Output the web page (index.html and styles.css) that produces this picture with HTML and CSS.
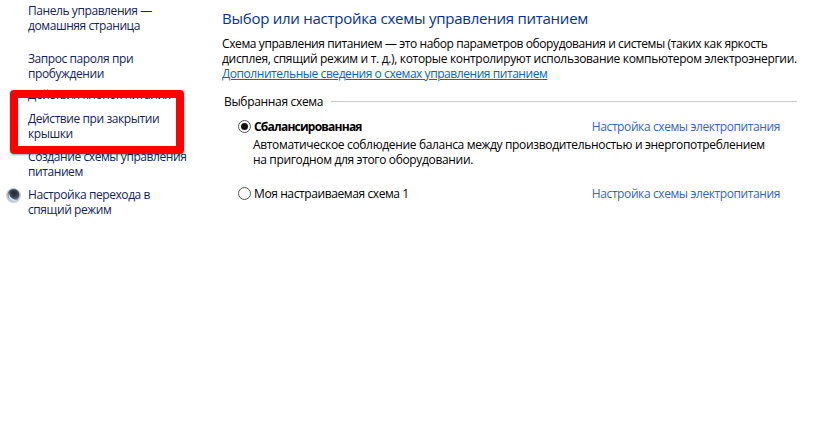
FILE: index.html
```html
<!DOCTYPE html>
<html lang="ru">
<head>
<meta charset="utf-8">
<title>Электропитание</title>
<link rel="stylesheet" href="styles.css">
</head>
<body>
<div class="page">
  <nav class="side">
    <a class="side-link first">Панель управления —<br>домашняя страница</a>
    <a class="side-link before-hidden">Запрос пароля при<br>пробуждении</a>
    <a class="side-link single">Действия кнопок питания</a>
    <a class="side-link">Действие при закрытии<br>крышки</a>
    <a class="side-link">Создание схемы управления<br>питанием</a>
    <a class="side-link has-icon">
      <svg class="moon" width="17" height="17" viewBox="0 0 17 17"><defs><radialGradient id="g" cx="0.55" cy="0.35" r="0.7"><stop offset="0" stop-color="#1c2430"/><stop offset="0.6" stop-color="#46505e"/><stop offset="1" stop-color="#a9c4ea"/></radialGradient></defs><circle cx="8.5" cy="8.500" r="7.500" fill="#c9ccd2"/><circle cx="8.500" cy="8" r="6" fill="url(#g)"/><path d="M4 5c0 4.500 3 7.500 8 8-2 1.300-5 1.300-6.700-.5S3 8 4 5z" fill="#d6e5fb"/></svg>
      Настройка перехода в<br>спящий режим</a>
    <div class="mark"></div>
  </nav>
  <main class="main">
    <h1 class="title">Выбор или настройка схемы управления питанием</h1>
    <p class="intro"><span class="tight">Схема управления питанием — это набор параметров оборудования и системы (таких как яркость</span><br>дисплея, спящий режим и т. д.), которые контролируют использование компьютером электроэнергии.<br><a class="more">Дополнительные сведения о схемах управления питанием</a></p>
    <div class="group-head"><span>Выбранная схема</span><i class="rule"></i></div>
    <div class="plan">
      <span class="radio on"></span>
      <b class="plan-name">Сбалансированная</b>
      <a class="plan-link">Настройка схемы электропитания</a>
    </div>
    <p class="plan-desc">Автоматическое соблюдение баланса между производительностью и энергопотреблением<br>на пригодном для этого оборудовании.</p>
    <div class="plan second">
      <span class="radio"></span>
      <span class="plan-name">Моя настраиваемая схема 1</span>
      <a class="plan-link">Настройка схемы электропитания</a>
    </div>
  </main>
</div>
</body>
</html>
```
FILE: styles.css
```css
html, body { margin: 0; padding: 0; background: #fff; }
body { width: 832px; height: 421px; overflow: hidden; font: 12px/15px "Open Sans", "Noto Sans", sans-serif; color: #000; }
.page { display: flex; height: 421px; }
.side { position: relative; width: 222px; flex: none; padding: 3px 0 0 28px; box-sizing: border-box; }
.side-link { display: block; position: relative; color: #12245c; white-space: nowrap; letter-spacing: -0.42px; margin-bottom: 8px; }
.side-link.first { margin-bottom: 18px; }
.side-link.before-hidden { margin-bottom: 6px; }
.side-link.single { margin-bottom: 9px; }
.moon { position: absolute; left: -23px; top: 0; }
.mark { position: absolute; left: 10px; top: 90px; width: 174px; height: 64px; box-sizing: border-box; border: 8px solid #fe0000; border-radius: 4px; box-shadow: 0 1px 2px rgba(0,0,0,.35); }
.main { flex: 1; min-width: 0; padding: 9px 35px 0 0; }
.title { margin: 0 0 8px; font-size: 15px; line-height: 19px; font-weight: 400; color: #003399; letter-spacing: -0.25px; }
.intro { margin: 0 0 13px; letter-spacing: -0.32px; color: #000; white-space: nowrap; }
.tight { letter-spacing: -0.4px; }
.more { color: #0066cc; text-decoration: underline; letter-spacing: -0.44px; }
.group-head { display: flex; align-items: center; gap: 8px; padding-left: 2px; letter-spacing: -0.32px; }
.rule { flex: 1; height: 1px; background: #c8c8c8; }
.plan { display: flex; align-items: center; height: 15px; margin: 10px 17px 0 16px; letter-spacing: -0.4px; }
.plan.second { margin-top: 19px; }
.radio { width: 11px; height: 11px; border: 1px solid #555; border-radius: 50%; margin-right: 3px; flex: none; position: relative; background: #fff; }
.radio.on::after { content: ""; position: absolute; left: 2px; top: 2px; width: 7px; height: 7px; border-radius: 50%; background: #111; }
.plan-name { font-weight: 400; }
b.plan-name { font-weight: 700; letter-spacing: -0.78px; }
.plan-link { margin-left: auto; color: #3365c5; }
.plan-desc { margin: 3px 0 0 31px; letter-spacing: -0.34px; white-space: nowrap; }
```
